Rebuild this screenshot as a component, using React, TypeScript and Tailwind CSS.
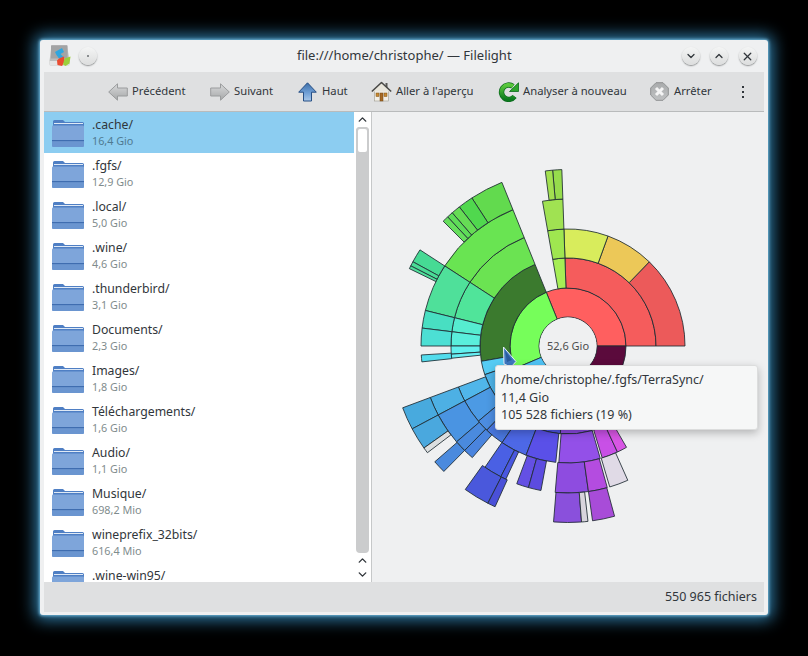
import { ChevronDown, ChevronUp, X } from 'lucide-react';

const font = { fontFamily: '"Noto Sans", sans-serif' };

const folders = [
  { name: '.cache/', size: '16,4 Gio' },
  { name: '.fgfs/', size: '12,9 Gio' },
  { name: '.local/', size: '5,0 Gio' },
  { name: '.wine/', size: '4,6 Gio' },
  { name: '.thunderbird/', size: '3,1 Gio' },
  { name: 'Documents/', size: '2,3 Gio' },
  { name: 'Images/', size: '1,8 Gio' },
  { name: 'Téléchargements/', size: '1,6 Gio' },
  { name: 'Audio/', size: '1,1 Gio' },
  { name: 'Musique/', size: '698,2 Mio' },
  { name: 'wineprefix_32bits/', size: '616,4 Mio' },
  { name: '.wine-win95/', size: '540,0 Mio' },
];

// ring, start angle, end angle (counter-clockwise from east), colour
const segments: [number, number, number, string][] = [
  [0, 0, 112, '#ff5f5f'],
  [0, 112, 203, '#76fe5a'],
  [0, 203, 240, '#50c4f6'],
  [0, 240, 320, '#7a50ee'],
  [0, 320, 360, '#5b0a3c'],
  [1, 0, 92, '#f55c5c'],
  [1, 92, 100, '#a6ee55'],
  [1, 112, 190, '#3b7a2e'],
  [1, 190, 199, '#55ccf4'],
  [1, 199, 236, '#4fb4e8'],
  [1, 236, 265, '#4f54e4'],
  [1, 265, 286, '#8a48e0'],
  [2, 0, 46, '#ec5a5a'],
  [2, 46, 70, '#ecc858'],
  [2, 70, 92, '#d8ec5c'],
  [2, 92, 100, '#9fe650'],
  [2, 112, 147, '#6be352'],
  [2, 147, 166, '#50e49a'],
  [2, 166, 173, '#56ecd0'],
  [2, 173, 180, '#5aeedc'],
  [2, 180, 184, '#62f0ee'],
  [2, 184, 186, '#66eef2'],
  [2, 200.5, 208, '#50b6ea'],
  [2, 208, 220, '#4c9ae4'],
  [2, 220, 226, '#4c8ce0'],
  [2, 226, 235.7, '#4a78e0'],
  [2, 235.7, 249, '#4d68e6'],
  [2, 249, 264, '#5a50e8'],
  [2, 265.5, 286, '#9350e8'],
  [2, 287, 295, '#c850e6'],
  [2, 295, 300, '#d856e4'],
  [3, 92, 100, '#a0e252'],
  [3, 112, 147, '#69e452'],
  [3, 147, 166, '#4fe09a'],
  [3, 166, 173, '#48dfc2'],
  [3, 173, 180, '#4cdfd4'],
  [3, 183.5, 186.2, '#52dcec'],
  [3, 200.5, 208, '#4db0e4'],
  [3, 208, 220.7, '#4a94e2'],
  [3, 220.7, 225.3, '#4a8ade'],
  [3, 225.3, 229.4, '#4a84de'],
  [3, 235.6, 242.8, '#4a60e4'],
  [3, 242.8, 245, '#4a58e0'],
  [3, 249.6, 254.4, '#6450e4'],
  [3, 254.4, 259.4, '#5c4ce0'],
  [3, 265, 278, '#8e4ce0'],
  [3, 278, 285.5, '#b44ce0'],
  [3, 286.5, 294, '#e0dae6'],
  [4, 92, 95, '#96dc4c'],
  [4, 95, 97.4, '#a2e050'],
  [4, 112, 123, '#62da4e'],
  [4, 123, 128, '#50d84e'],
  [4, 128, 131, '#66dc55'],
  [4, 131, 133, '#5edc58'],
  [4, 133, 135, '#66de5c'],
  [4, 147, 151.5, '#46da94'],
  [4, 151.5, 153, '#4adc96'],
  [4, 153, 154, '#50de9a'],
  [4, 200.5, 208, '#48aade'],
  [4, 208, 215.3, '#4aa8de'],
  [4, 215.3, 217.2, '#dcdfe0'],
  [4, 221, 225.3, '#4a8ade'],
  [4, 234.4, 243, '#4a58dc'],
  [4, 243, 245.6, '#4a50d8'],
  [4, 265.3, 274.4, '#8a50dc'],
  [4, 274.4, 276.5, '#d8d4dc'],
  [4, 278, 285.3, '#a84cd8'],
];

const radii = [29, 58, 88, 117, 147, 176.5];

function arcPath(ring: number, from: number, to: number) {
  const cx = 568;
  const cy = 346;
  const r0 = radii[ring];
  const r1 = radii[ring + 1];
  const pt = (r: number, a: number) => {
    const t = (a * Math.PI) / 180;
    return `${(cx + r * Math.cos(t)).toFixed(2)} ${(cy - r * Math.sin(t)).toFixed(2)}`;
  };
  const large = to - from > 180 ? 1 : 0;
  return `M${pt(r0, from)} L${pt(r1, from)} A${r1} ${r1} 0 ${large} 0 ${pt(r1, to)} L${pt(r0, to)} A${r0} ${r0} 0 ${large} 1 ${pt(r0, from)} Z`;
}

function FolderIcon() {
  return (
    <svg width="34" height="30" viewBox="0 0 34 30" className="shrink-0">
      <path d="M2 3.5Q2 2 3.5 2H12L14 4H31.5Q33 4 33 5.5V9H2Z" fill="#4f7fc4" />
      <path d="M3 5.5H32" stroke="#dfe9f5" strokeWidth="1" />
      <path d="M1 8.5Q1 7.5 2 7.5H32Q33 7.5 33 8.5V27.5Q33 29 31.5 29H2.5Q1 29 1 27.5Z" fill="#7ea5da" />
      <rect x="1" y="22" width="32" height="1.5" fill="#3f6db0" />
      <path d="M1 23.5H33V27.5Q33 29 31.5 29H2.5Q1 29 1 27.5Z" fill="#6a95d0" />
    </svg>
  );
}

function SideArrow({ flip }: { flip?: boolean }) {
  return (
    <svg width="20" height="18" viewBox="0 0 20 18" className={flip ? '-scale-x-100' : ''}>
      <defs>
        <linearGradient id="grayArrow" x1="0" y1="0" x2="0" y2="1">
          <stop offset="0" stopColor="#d8d9da" />
          <stop offset="1" stopColor="#a6a8a9" />
        </linearGradient>
      </defs>
      <path d="M0.7 9L9.5 0.8V5H19.3V13H9.5V17.2Z" fill="url(#grayArrow)" stroke="#9a9c9d" strokeWidth="1" strokeLinejoin="round" />
    </svg>
  );
}

function UpArrow() {
  return (
    <svg width="19" height="20" viewBox="0 0 19 20">
      <defs>
        <linearGradient id="blueArrow" x1="0" y1="0" x2="0" y2="1">
          <stop offset="0" stopColor="#3e6fa8" />
          <stop offset="0.55" stopColor="#6f9fd6" />
          <stop offset="1" stopColor="#a9c8ea" />
        </linearGradient>
      </defs>
      <path d="M9.5 0.8L18.3 10.2H13.5V19H5.5V10.2H0.7Z" fill="url(#blueArrow)" stroke="#274f85" strokeWidth="1" strokeLinejoin="round" />
    </svg>
  );
}

function HomeIcon() {
  return (
    <svg width="21" height="21" viewBox="0 0 21 21">
      <rect x="3.5" y="9" width="14" height="11" fill="#f2efe6" stroke="#9d9a90" strokeWidth="0.6" />
      <rect x="14.5" y="2" width="2" height="5" fill="#5a5a58" />
      <path d="M0.8 10.5L10.5 1.5L20.2 10.5" fill="#e9e6dc" stroke="#4a4a48" strokeWidth="1.6" strokeLinejoin="round" />
      <rect x="5" y="12" width="3" height="3.5" fill="#c98a32" stroke="#7a4f18" strokeWidth="0.5" />
      <rect x="13" y="12" width="3" height="3.5" fill="#c98a32" stroke="#7a4f18" strokeWidth="0.5" />
      <rect x="9" y="12" width="3" height="8" fill="#a86a24" stroke="#6e4414" strokeWidth="0.5" />
    </svg>
  );
}

function ReloadIcon() {
  return (
    <svg width="21" height="20" viewBox="0 0 21 20">
      <defs>
        <linearGradient id="greenArc" x1="0" y1="0" x2="0" y2="1">
          <stop offset="0" stopColor="#5ac83c" />
          <stop offset="1" stopColor="#0c7a1e" />
        </linearGradient>
      </defs>
      <path d="M16.5 14.5A7.2 7.2 0 1 1 15 4.4" fill="none" stroke="#0a6a1c" strokeWidth="5.4" />
      <path d="M16.5 14.5A7.2 7.2 0 1 1 15 4.4" fill="none" stroke="url(#greenArc)" strokeWidth="4" />
      <path d="M20.5 0.8V9.5H11.5Z" fill="#2ea52c" stroke="#0a6a1c" strokeWidth="0.8" strokeLinejoin="round" />
    </svg>
  );
}

function StopIcon() {
  return (
    <svg width="19" height="19" viewBox="0 0 19 19">
      <defs>
        <linearGradient id="stopFill" x1="0" y1="0" x2="0" y2="1">
          <stop offset="0" stopColor="#a9abac" />
          <stop offset="1" stopColor="#bfc1c2" />
        </linearGradient>
      </defs>
      <path d="M6 0.7H13L18.3 6V13L13 18.3H6L0.7 13V6Z" fill="url(#stopFill)" stroke="#8f9192" strokeWidth="1" />
      <path d="M6 6L13 13M13 6L6 13" stroke="#f4f4f4" strokeWidth="3" />
    </svg>
  );
}

function AppIcon() {
  return (
    <svg width="23" height="23" viewBox="0 0 23 23">
      <path d="M3.5 1H19L21.5 17V20Q21.5 21.5 20 21.5H3Q1.5 21.5 1.5 20V17Z" fill="#bcbdbd" />
      <rect x="3" y="1.5" width="16.5" height="13" fill="#a3a4a5" />
      <path d="M1.5 17H21.5V20Q21.5 21.5 20 21.5H3Q1.5 21.5 1.5 20Z" fill="#e4e4e4" />
      <path d="M7 8L14 4L16 8L12.5 10L15.5 13L11 14.5L8.5 11Z" fill="#2fa6e0" />
      <path d="M11 14.5L16 12.5L16.5 18L14 22L9.5 21L9 16.5Z" fill="#ea4b30" />
      <path d="M16.5 14.5L22.5 12.5L21.5 19.5L17.5 22L15 20.5Z" fill="#9ccf3a" />
    </svg>
  );
}

function RoundButton({ children, className = '' }: { children?: React.ReactNode; className?: string }) {
  return (
    <div className={`flex h-[18px] w-[18px] items-center justify-center rounded-full bg-gradient-to-b from-[#f4f5f5] to-[#dcdddd] shadow-[0_1px_1.5px_#8b8d8e] ${className}`}>
      {children}
    </div>
  );
}

function ToolItem({ icon, label, className }: { icon: React.ReactNode; label: string; className: string }) {
  return (
    <div className={`flex items-center whitespace-nowrap ${className}`}>
      {icon}
      <span>{label}</span>
    </div>
  );
}

export default function App() {
  return (
    <div className="h-[656px] w-[808px] overflow-hidden bg-black pl-[40px] pt-[40px] text-[#31363b]" style={font}>
      <div className="flex h-[575px] w-[728px] flex-col rounded-[3px] bg-[#eff0f1] px-[4px] pb-[3px] shadow-[0_0_3px_1px_#6fb4d6,0_0_16px_5px_#2f7ba6]">
        {/* Title bar */}
        <div className="relative flex h-[32px] shrink-0 items-center text-[13px]">
          <div className="ml-[4px] mr-[8px] mt-[-1px]"><AppIcon /></div>
          <RoundButton><span className="h-[2px] w-[2px] rounded-full bg-[#6b6f72]" /></RoundButton>
          <div className="flex-1 pl-[30px] text-center">file:///home/christophe/ — Filelight</div>
          <div className="flex items-center gap-[10.5px] pr-[7.5px]">
            <RoundButton><ChevronDown size={12} strokeWidth={2.6} /></RoundButton>
            <RoundButton><ChevronUp size={12} strokeWidth={2.6} /></RoundButton>
            <RoundButton><X size={13} strokeWidth={2.4} /></RoundButton>
          </div>
        </div>

        {/* Toolbar */}
        <div className="flex h-[40px] shrink-0 items-center border-b border-[#b9bbbc] bg-[#dfe0e1] pl-[64px] text-[11.25px]">
          <ToolItem icon={<SideArrow />} label="Précédent" className="w-[102px] gap-[4px]" />
          <ToolItem icon={<SideArrow flip />} label="Suivant" className="w-[88px] gap-[4px]" />
          <ToolItem icon={<UpArrow />} label="Haut" className="w-[73px] gap-[5px]" />
          <ToolItem icon={<HomeIcon />} label="Aller à l'aperçu" className="w-[127px] gap-[4px]" />
          <ToolItem icon={<ReloadIcon />} label="Analyser à nouveau" className="w-[152px] gap-[4px]" />
          <ToolItem icon={<StopIcon />} label="Arrêter" className="w-[92px] gap-[5px]" />
          <div className="flex flex-col gap-[3px]">
            <span className="h-[2px] w-[2px] bg-[#31363b]" />
            <span className="h-[2px] w-[2px] bg-[#31363b]" />
            <span className="h-[2px] w-[2px] bg-[#31363b]" />
          </div>
        </div>

        {/* Content */}
        <div className="flex min-h-0 flex-1">
          <div className="flex w-[328px] shrink-0 border-r border-[#c6c8c9] bg-white">
            <div className="min-w-0 flex-1 overflow-hidden">
              {folders.map((f, i) => (
                <div key={f.name} className={`flex h-[41px] items-center gap-[7px] pl-[7px] ${i === 0 ? 'bg-[#8ccdf1]' : ''}`}>
                  <FolderIcon />
                  <div>
                    <div className="text-[12.25px] leading-[17px]">{f.name}</div>
                    <div className={`text-[10.8px] leading-[16px] ${i === 0 ? 'text-[#4f7a92]' : 'text-[#7f8c8d]'}`}>{f.size}</div>
                  </div>
                </div>
              ))}
            </div>
            <div className="flex w-[17px] shrink-0 flex-col items-center">
              <div className="flex h-[15px] shrink-0 items-center justify-center"><ChevronUp size={13} strokeWidth={2.6} /></div>
              <div className="h-[426px] w-[13px] rounded-[4px] bg-[#cbcccd]">
                <div className="h-[27px] w-[13px] rounded-[4px] border-2 border-[#cbcccd] bg-white" />
              </div>
              <div className="flex h-[15px] shrink-0 items-center justify-center"><ChevronUp size={13} strokeWidth={2.6} /></div>
              <div className="flex h-[13px] shrink-0 items-center justify-center"><ChevronDown size={13} strokeWidth={2.6} /></div>
            </div>
          </div>

          <div className="relative min-w-0 flex-1">
            <svg width="392" height="470" viewBox="372 112 392 470" className="block">
              {segments.map(([ring, from, to, color], i) => (
                <path key={i} d={arcPath(ring, from, to)} fill={color} stroke="#1f2b33" strokeOpacity="0.85" strokeWidth="1" />
              ))}
              <circle cx="568" cy="346" r="28.5" fill="#eff0f1" />
              <text x="568" y="350" textAnchor="middle" fontSize="11" fill="#4d4d4d" style={font}>52,6 Gio</text>
              <path d="M503.5 347L516 361.5L511 367L504 364Z" fill="#3f78c0" stroke="#e8f0f8" strokeWidth="1" strokeLinejoin="round" />
              <path d="M505 350.5L512 360L507 362Z" fill="#2a5c9e" />
            </svg>
            {/* Tooltip */}
            <div className="absolute left-[122.5px] top-[253px] h-[65px] w-[263px] rounded-[3px] border border-[#dcdddd] bg-[#f6f7f7] px-[5.5px] pt-[5px] text-[12.5px] leading-[17.7px] shadow-[0_3px_9px_rgba(0,0,0,0.25)]">
              <div>/home/christophe/.fgfs/TerraSync/</div>
              <div>11,4 Gio</div>
              <div>105 528 fichiers (19 %)</div>
            </div>
          </div>
        </div>

        {/* Status bar */}
        <div className="flex h-[30px] shrink-0 items-center justify-end bg-[#dfe0e1] pr-[7px] text-[12.5px]">550 965 fichiers</div>
      </div>
    </div>
  );
}
